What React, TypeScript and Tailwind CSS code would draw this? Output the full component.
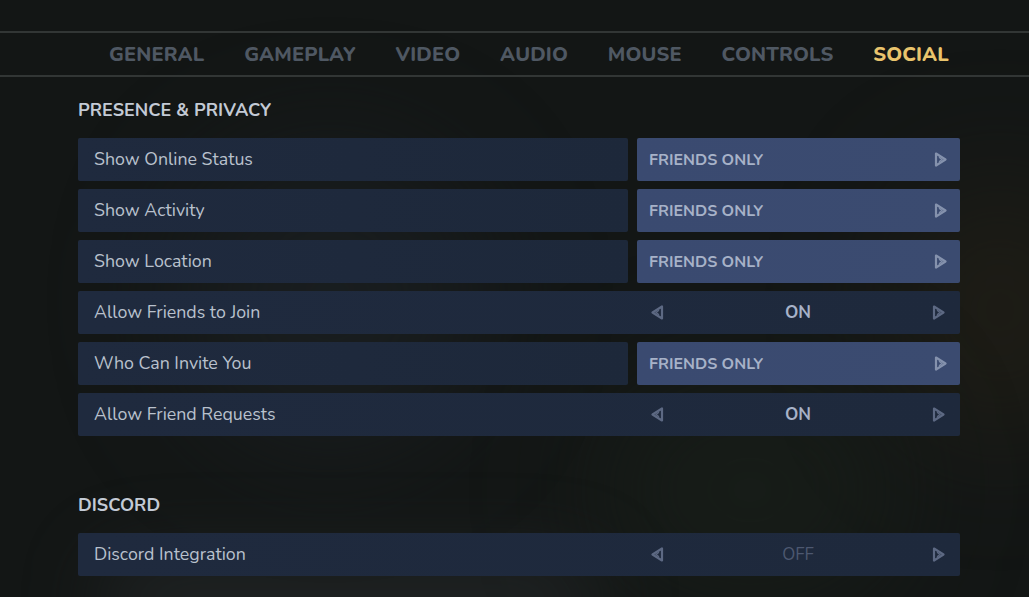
import React from "react";

const font = { fontFamily: '"Nunito", "Lato", "Open Sans", sans-serif' };

function Arrow({ dir }: { dir: "left" | "right" }) {
  return (
    <svg width="13" height="15" viewBox="0 0 13 15" className={dir === "left" ? "rotate-180" : ""}>
      <path d="M2 1.5 L11.5 7.5 L2 13.5 Z" fill="none" stroke="currentColor" strokeWidth="2.2" strokeLinejoin="round" />
      <path d="M5 5.2 L8 7.5 L5 9.8" fill="none" stroke="currentColor" strokeWidth="1.2" />
    </svg>
  );
}

function SelectRow({ label, value }: { label: string; value: string }) {
  return (
    <div className="flex h-[43px] gap-[9px]">
      <div className="flex w-[550px] items-center rounded-[2px] bg-gradient-to-r from-[#1f2a3e] to-[#1d283a] pl-4 text-[17.8px] text-[#b9c1cd]">
        {label}
      </div>
      <div className="flex flex-1 items-center justify-between rounded-[2px] bg-gradient-to-r from-[#3a4a70] to-[#3b4b70] pl-3 pr-[13px]">
        <span className="text-[16px] font-bold text-[#a7b2c8]">{value}</span>
        <span className="text-[#8592ad]">
          <Arrow dir="right" />
        </span>
      </div>
    </div>
  );
}

function ToggleRow({ label, value, dim }: { label: string; value: string; dim?: boolean }) {
  return (
    <div className="flex h-[43px] rounded-[2px] bg-gradient-to-r from-[#1f2a3e] to-[#1e293c]">
      <div className="flex w-[559px] items-center pl-4 text-[17.8px] text-[#b9c1cd]">{label}</div>
      <div className="flex flex-1 items-center justify-between pl-[14px] pr-[15px] text-[#5d6983]">
        <Arrow dir="left" />
        <span className={dim ? "text-[17px] text-[#4d5870]" : "text-[17px] font-bold text-[#a7b2c8]"}>{value}</span>
        <Arrow dir="right" />
      </div>
    </div>
  );
}

export default function App() {
  const tabs = ["GENERAL", "GAMEPLAY", "VIDEO", "AUDIO", "MOUSE", "CONTROLS", "SOCIAL"];
  return (
    <div
      className="relative h-[597px] w-[1029px] overflow-hidden bg-[#131615]"
      style={font}
    >
      <div className="pointer-events-none absolute inset-0">
        <div className="absolute left-[180px] top-[150px] h-[300px] w-[300px] rounded-full bg-[#1d2226] opacity-60 blur-3xl" />
        <div className="absolute left-[900px] top-[180px] h-[260px] w-[200px] rounded-full bg-[#2a2417] opacity-50 blur-3xl" />
        <div className="absolute left-[600px] top-[380px] h-[220px] w-[300px] rounded-full bg-[#1a211a] opacity-60 blur-3xl" />
        <div className="absolute left-[100px] top-[560px] h-[80px] w-[500px] rounded-full bg-[#2a2e30] opacity-60 blur-2xl" />
      </div>
      <div className="relative">
        <div className="h-[31px]" />
        <div className="flex h-[46px] items-center gap-[39.8px] border-y-2 border-[#323635] pl-[109px] pt-[2px]">
          {tabs.map((t) => (
            <span
              key={t}
              className={
                t === "SOCIAL"
                  ? "text-[20px] font-extrabold tracking-[0.15px] text-[#e9c46d]"
                  : "text-[20px] font-extrabold tracking-[0.15px] text-[#4f5863]"
              }
            >
              {t}
            </span>
          ))}
        </div>
        <div className="mx-[78px] w-[882px]">
          <div className="flex h-[61px] items-center pt-[5px] text-[18px] font-bold text-[#c3cad5]">
            PRESENCE &amp; PRIVACY
          </div>
          <div className="flex flex-col gap-[8px]">
            <SelectRow label="Show Online Status" value="FRIENDS ONLY" />
            <SelectRow label="Show Activity" value="FRIENDS ONLY" />
            <SelectRow label="Show Location" value="FRIENDS ONLY" />
            <ToggleRow label="Allow Friends to Join" value="ON" />
            <SelectRow label="Who Can Invite You" value="FRIENDS ONLY" />
            <ToggleRow label="Allow Friend Requests" value="ON" />
          </div>
          <div className="flex h-[97px] items-end pb-[14px] text-[18px] font-bold text-[#c3cad5]">DISCORD</div>
          <ToggleRow label="Discord Integration" value="OFF" dim />
        </div>
      </div>
    </div>
  );
}
